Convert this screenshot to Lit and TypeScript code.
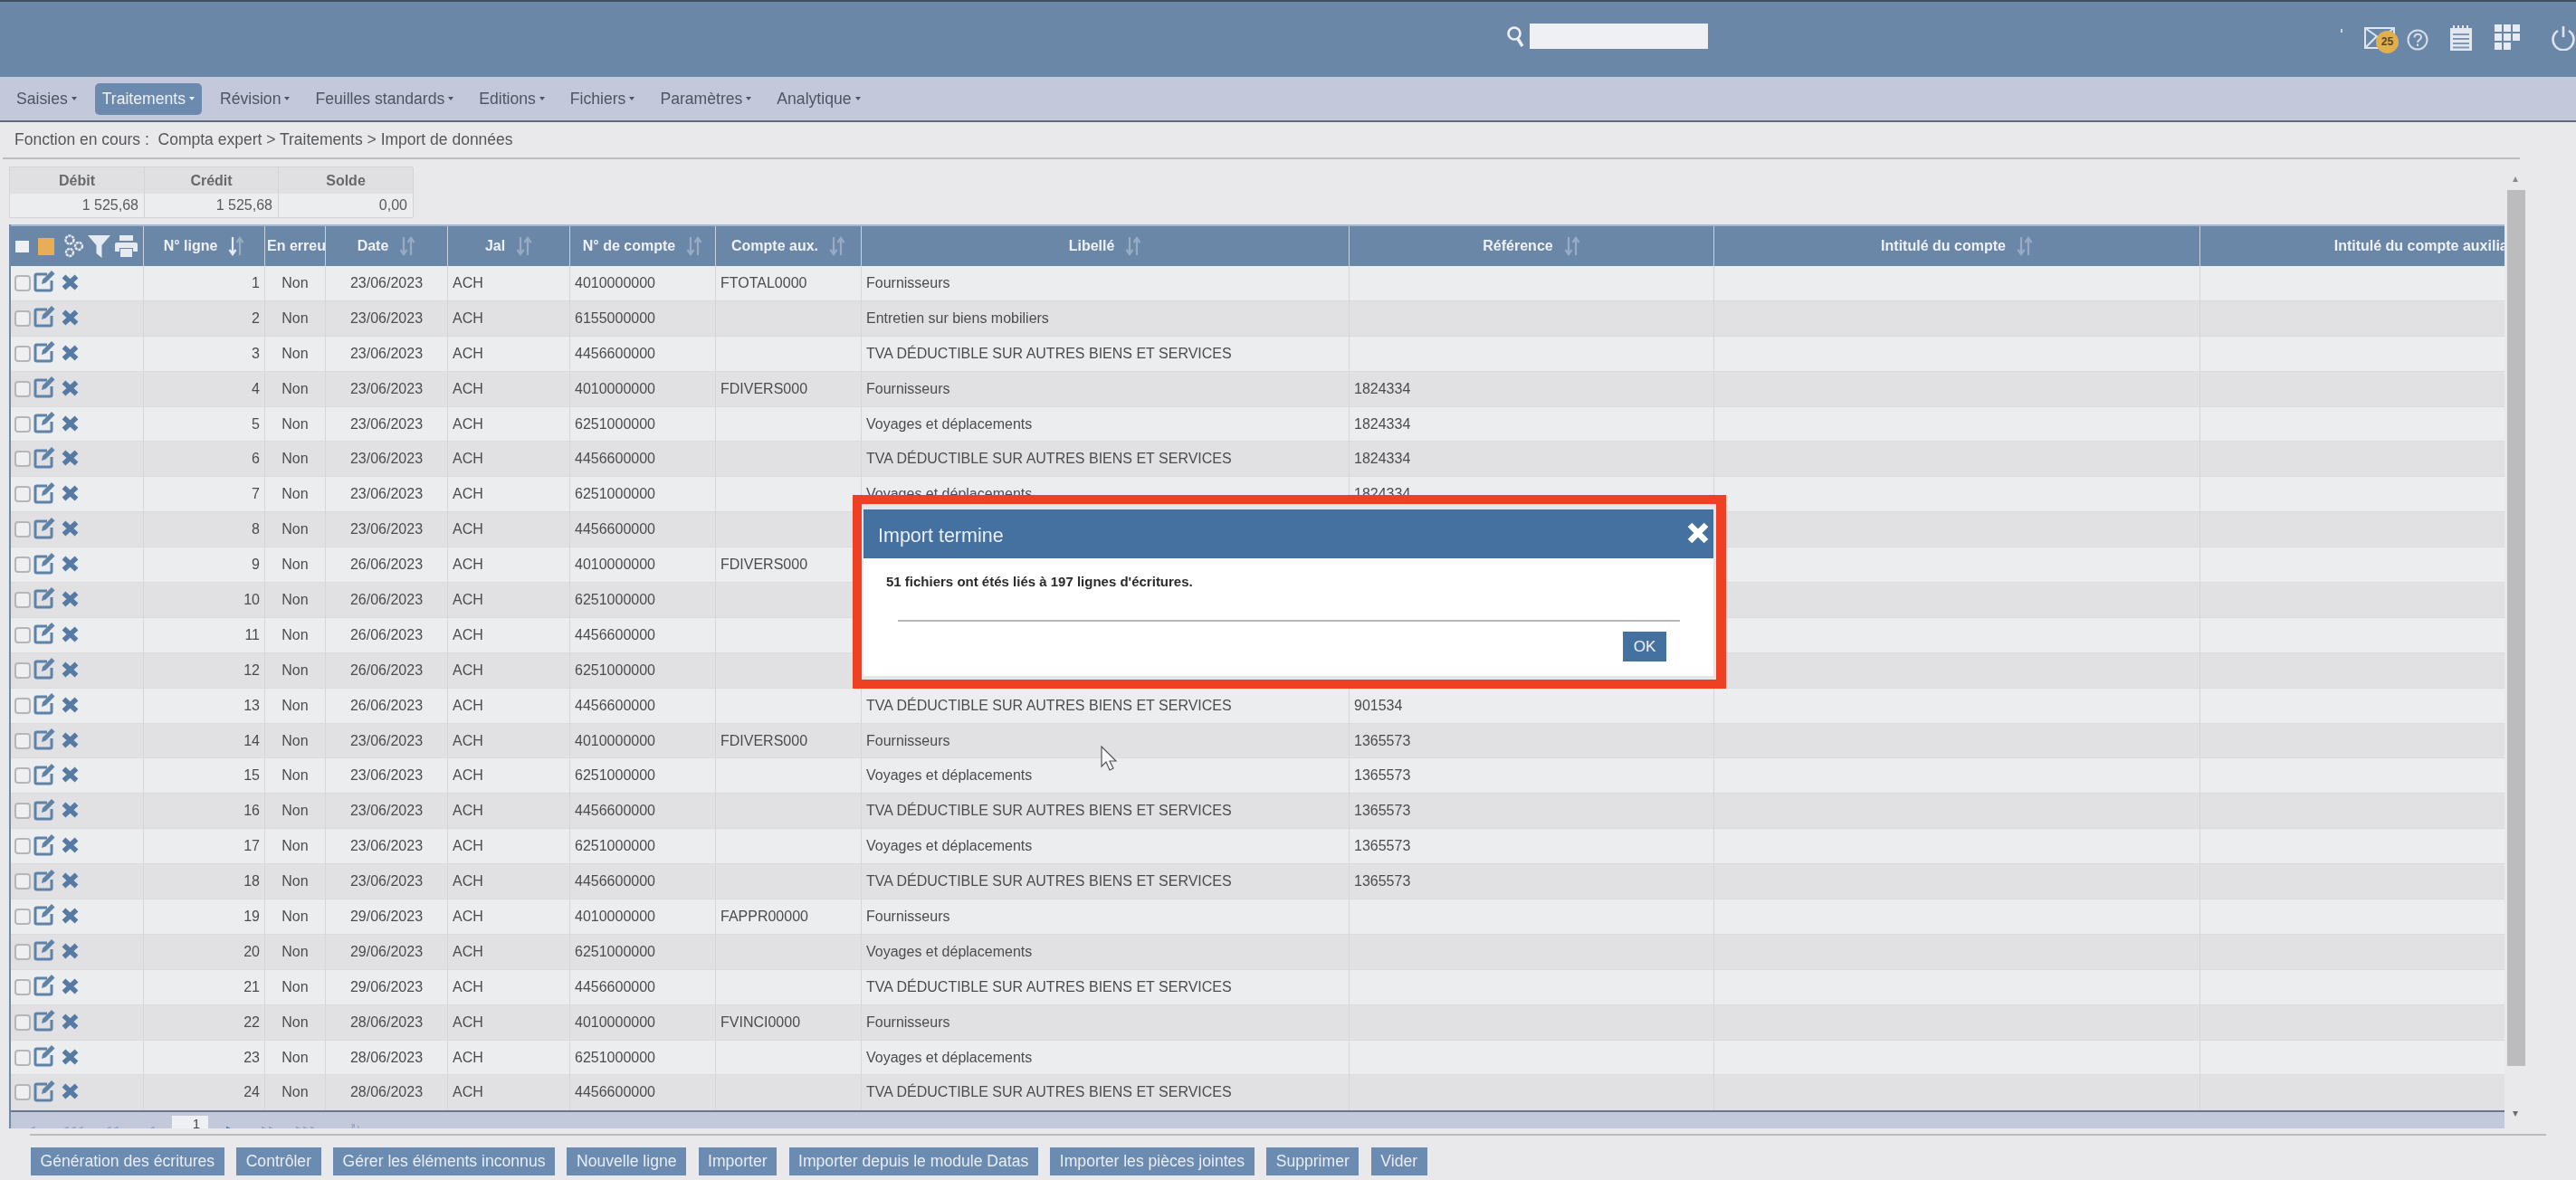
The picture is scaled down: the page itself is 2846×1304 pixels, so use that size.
import { LitElement, html, css, svg } from 'lit';
import { customElement } from 'lit/decorators.js';

const TVA = 'TVA DÉDUCTIBLE SUR AUTRES BIENS ET SERVICES';
const VOY = 'Voyages et déplacements';
const FOU = 'Fournisseurs';

// ligne, date, compte, aux, libelle, reference
const ROWS: [number, string, string, string, string, string][] = [
  [1, '23/06/2023', '4010000000', 'FTOTAL0000', FOU, ''],
  [2, '23/06/2023', '6155000000', '', 'Entretien sur biens mobiliers', ''],
  [3, '23/06/2023', '4456600000', '', TVA, ''],
  [4, '23/06/2023', '4010000000', 'FDIVERS000', FOU, '1824334'],
  [5, '23/06/2023', '6251000000', '', VOY, '1824334'],
  [6, '23/06/2023', '4456600000', '', TVA, '1824334'],
  [7, '23/06/2023', '6251000000', '', VOY, '1824334'],
  [8, '23/06/2023', '4456600000', '', TVA, '1824334'],
  [9, '26/06/2023', '4010000000', 'FDIVERS000', FOU, '901534'],
  [10, '26/06/2023', '6251000000', '', VOY, '901534'],
  [11, '26/06/2023', '4456600000', '', TVA, '901534'],
  [12, '26/06/2023', '6251000000', '', VOY, '901534'],
  [13, '26/06/2023', '4456600000', '', TVA, '901534'],
  [14, '23/06/2023', '4010000000', 'FDIVERS000', FOU, '1365573'],
  [15, '23/06/2023', '6251000000', '', VOY, '1365573'],
  [16, '23/06/2023', '4456600000', '', TVA, '1365573'],
  [17, '23/06/2023', '6251000000', '', VOY, '1365573'],
  [18, '23/06/2023', '4456600000', '', TVA, '1365573'],
  [19, '29/06/2023', '4010000000', 'FAPPR00000', FOU, ''],
  [20, '29/06/2023', '6251000000', '', VOY, ''],
  [21, '29/06/2023', '4456600000', '', TVA, ''],
  [22, '28/06/2023', '4010000000', 'FVINCI0000', FOU, ''],
  [23, '28/06/2023', '6251000000', '', VOY, ''],
  [24, '28/06/2023', '4456600000', '', TVA, ''],
];

const NAV = ['Saisies', 'Traitements', 'Révision', 'Feuilles standards', 'Editions', 'Fichiers', 'Paramètres', 'Analytique'];
const BUTTONS = ['Génération des écritures', 'Contrôler', 'Gérer les éléments inconnus', 'Nouvelle ligne', 'Importer', 'Importer depuis le module Datas', 'Importer les pièces jointes', 'Supprimer', 'Vider'];
const COLS = ['N° ligne', 'En erreur', 'Date', 'Jal', 'N° de compte', 'Compte aux.', 'Libellé', 'Référence', 'Intitulé du compte', 'Intitulé du compte auxiliaire'];

const sortIcon = (active = false) => html`<svg class="sort" viewBox="0 0 18 24" fill="none" stroke-width="2.200">
  <g stroke=${active ? '#e8edf3' : '#97abc4'}><path d="M5 2v19M1.500 16 5 21l3.500-5"/></g>
  <g stroke="#97abc4"><path d="M13 22V3M9.500 8 13 3l3.500 5"/></g>
</svg>`;

const editIcon = svg`<path d="M15 6H3.500A1.500 1.500 0 0 0 2 7.500V22.500A1.500 1.500 0 0 0 3.500 24H18.500A1.500 1.500 0 0 0 20 22.500V13" fill="none" stroke="#5f82a8" stroke-width="3"/><path d="M9 17l1-5L20 2l3.500 3.500-10 10z" fill="#5f82a8"/>`;

@customElement('app-root')
export class AppRoot extends LitElement {
  static styles = css`
:host {
  display: block;
  position: relative;
  width: 2846px;
  height: 1304px;
  overflow: hidden;
  background: #e9e9eb;
  font-family: "Liberation Sans", Arial, sans-serif;
  color: #4c4c4e;
}

.page {
  height: 1304px;
  display: flex;
  flex-direction: column;
  filter: blur(0.7px);
}

.top {
  height: 83px;
  flex: none;
  border-top: 2px solid #3f5063;
  background: #6b87a8;
  display: flex;
  align-items: flex-start;
  color: #e4e8ef;
}
.search { display: flex; align-items: center; margin: 23px 0 0 1664px; }
.search svg { width: 22px; height: 30px; margin-right: 4px; }
.search-box { width: 197px; height: 28px; background: #eef0f3; }
.tick { width: 2px; height: 4px; background: #c8d2e0; margin: 30px 0 0 699px; }
.tool { display: block; margin-top: 25px; flex: none; }
.mail { width: 46px; height: 38px; margin-left: 24px; position: relative; }
.mail svg { width: 34px; height: 24px; margin-top: 3px; display: block; }
.badge {
  position: absolute;
  left: 13px;
  top: 7px;
  width: 25px;
  height: 25px;
  border-radius: 50%;
  background: #e0b04f;
  color: #5a4a22;
  font-size: 12px;
  font-weight: bold;
  line-height: 25px;
  text-align: center;
}
.help { width: 24px; height: 24px; margin: 30px 0 0 1px; flex: none; }
.note { width: 26px; height: 29px; margin: 25px 0 0 23px; flex: none; }
.apps { width: 28px; height: 29px; margin: 25px 0 0 24px; flex: none; }
.power { width: 28px; height: 28px; margin: 26px 0 0 34px; flex: none; }

.nav {
  height: 48px;
  flex: none;
  border-bottom: 2px solid #5e6b7a;
  background: #c3c9da;
  box-sizing: content-box;
  display: flex;
  align-items: center;
  padding-left: 10px;
  gap: 12px;
  font-size: 17.600px;
  color: #4d5563;
}
.nav-item {
  height: 35px;
  padding: 0 8px;
  display: flex;
  align-items: center;
  border-radius: 5px;
}
.nav-item.active { background: #6b8aad; color: #eef1f6; }
.caret {
  width: 0;
  height: 0;
  margin-left: 4px;
  border-left: 3.500px solid transparent;
  border-right: 3.500px solid transparent;
  border-top: 4px solid currentColor;
}

.crumb {
  height: 39px;
  flex: none;
  padding-left: 16px;
  display: flex;
  align-items: center;
  font-size: 17.500px;
  white-space: pre;
  color: #55565a;
}
.rule { height: 2px; flex: none; background: #bcbcbe; margin: 0 62px 0 3px; }

.main { display: flex; flex: none; padding: 8px 0 0 10px; }
.sheet { width: 2757px; flex: none; }

.totals {
  display: grid;
  grid-template-columns: 149px 148px 149px;
  width: 446px;
  height: 57px;
  box-sizing: border-box;
  border: 1px solid #d4d4d7;
  margin-bottom: 7px;
  font-size: 16px;
}
.totals div { display: flex; align-items: center; border-right: 1px solid #d4d4d7; }
.totals .h { height: 29px; justify-content: center; background: #e0e0e2; font-weight: bold; color: #66686c; }
.totals .v { height: 26px; justify-content: flex-end; padding-right: 6px; background: #ecedef; color: #5a5b5e; }

.table {
  width: 2757px;
  overflow: hidden;
  box-sizing: border-box;
  border-left: 2px solid #6f89a8;
}
.row {
  display: grid;
  grid-template-columns: 147px 134px 67px 135px 135px 161px 161px 539px 403px 537px 538px;
  width: 2857px;
}
.head { height: 46px; background: #6b87a8; border-top: 2px solid #a3b7cf; box-sizing: border-box; color: #eef1f5; }
.head > div {
  display: flex;
  align-items: center;
  justify-content: center;
  min-width: 0;
  overflow: hidden;
  white-space: nowrap;
  border-right: 1px solid #c6d2e0;
  font-size: 16px;
  font-weight: bold;
}
.head .tools { justify-content: flex-start; padding-left: 5px; }
.head .tools svg, .head .tools span { flex: none; }
.white-box { width: 15px; height: 13px; background: #eef0f3; margin-right: 10px; }
.orange-box { width: 18px; height: 19px; background: #e7ae55; margin-right: 10px; }
.gears { width: 23px; height: 30px; margin-right: 4px; }
.filter { width: 25px; height: 26px; margin-right: 5px; }
.printer { width: 25px; height: 24px; }
.head .clip { justify-content: flex-start; padding-left: 2px; }
.sort { width: 18px; height: 24px; margin-left: 12px; flex: none; }

.body .row { height: 38.900px; background: #ecedef; font-size: 16px; }
.body .row:nth-child(even) { background: #e1e1e4; }
.body .cell {
  display: flex;
  align-items: center;
  padding: 0 5px;
  white-space: nowrap;
  border-right: 1px solid #d6d6d9;
  border-bottom: 1px solid #dbdbde;
  box-sizing: border-box;
}
.cell.right { justify-content: flex-end; }
.cell.center { justify-content: center; }
.cell.actions { padding: 0 0 0 4px; }
.check {
  width: 18px;
  height: 18px;
  box-sizing: border-box;
  border: 2px solid #b5b6ba;
  border-radius: 4px;
  background: #efeff1;
  margin-right: 3px;
}
.edit { width: 24px; height: 26px; margin: -5px 7px 0 0; }
.del { width: 19px; height: 18px; margin-top: -2px; }

.pager {
  height: 18px;
  overflow: hidden;
  background: #c3c9da;
  border-top: 2px solid #66788d;
  box-sizing: content-box;
  display: flex;
  align-items: flex-start;
  padding-left: 20px;
  color: #8ea3cb;
}
.pg { font-size: 13px; line-height: 13px; margin-top: 11px; letter-spacing: 1px; white-space: nowrap; }
.pg.b { margin-left: 29px; }
.pg.c { margin-left: 23px; }
.pg.d { margin-left: 32px; }
.pg.n { margin-left: 18px; width: 40px; height: 18px; margin-top: 4px; background: #eef0f3; box-sizing: border-box; text-align: right; padding-right: 8px; color: #44474c; line-height: 18px; font-size: 15px; }
.pg.next { margin-left: 20px; color: #5f7fc0; }
.pg.e { margin-left: 31px; }
.pg.f { margin-left: 22px; }
.pg.g { margin-left: 36px; }

.bar { width: 23px; flex: none; display: flex; flex-direction: column; align-items: center; }
.arrow { width: 0; height: 0; border-left: 3.500px solid transparent; border-right: 3.500px solid transparent; }
.arrow.up { border-bottom: 6px solid #8a8a8c; margin-top: 11px; }
.arrow.down { border-top: 6px solid #6d6d70; margin-top: 50px; }
.thumb { width: 20px; height: 968px; background: #bcbcbf; margin: 9px 0 0 3px; }

.rule2 { height: 2px; flex: none; background: #bcbcbe; margin: 6px 33px 0 33px; }

.actions-bar { display: flex; gap: 13.500px; padding: 13px 0 0 34px; flex: none; }
.btn {
  height: 31px;
  padding: 0 10.500px;
  display: flex;
  align-items: center;
  background: #6b8cb0;
  color: #e9edf3;
  font-size: 17.600px;
  white-space: nowrap;
}

.dialog {
  position: absolute;
  left: 942px;
  top: 547px;
  width: 965px;
  height: 214px;
  box-sizing: border-box;
  border: solid #ee4023;
  border-width: 10px 11px 10px 10px;
  padding: 6px 3px 4px 2px;
  background: #e4e6ec;
  display: flex;
  flex-direction: column;
}
.d-title {
  height: 54px;
  flex: none;
  background: #44719f;
  color: #e8eef5;
  display: flex;
  align-items: center;
  justify-content: space-between;
  padding: 5px 5px 0 16px;
  box-sizing: border-box;
  font-size: 21.500px;
  filter: blur(0.4px);
}
.d-title svg { width: 24px; height: 24px; margin-top: -8px; }
.d-body {
  flex: 1;
  background: #fff;
  padding: 17px 37px 0 25px;
  display: flex;
  flex-direction: column;
}
.d-msg { font-size: 15px; font-weight: bold; color: #2a2a2c; line-height: 18px; filter: blur(0.3px); }
.d-rule { height: 2px; background: #b9b9bb; margin: 33px 0 0 13px; }
.d-ok {
  align-self: flex-end;
  width: 48px;
  height: 33px;
  margin: 11px 15px 0 0;
  background: #44719f;
  color: #eef2f7;
  font-size: 17px;
  display: flex;
  align-items: center;
  justify-content: center;
}

.cursor { position: absolute; left: 1215px; top: 824px; width: 20px; height: 30px; filter: blur(0.5px); }
  `;

  renderHeader() {
    return html`<div class="top">
      <div class="search">
        <svg viewBox="0 0 22 30" fill="none" stroke="#eef1f5"><circle cx="9" cy="12" r="6.500" stroke-width="2.600"/><path d="M13 18l5 8" stroke-width="3.400"/></svg>
        <div class="search-box"></div>
      </div>
      <div class="tick"></div>
      <div class="tool mail">
        <svg viewBox="0 0 34 24" fill="none" stroke="#dfe5ee" stroke-width="2"><rect x="1" y="1" width="32" height="22"/><path d="M1 1l17 12L33 1M1 23l13-13"/></svg>
        <div class="badge">25</div>
      </div>
      <svg class="help" viewBox="0 0 24 24" fill="none" stroke="#d5dde8" stroke-width="2"><circle cx="12" cy="12" r="10.500"/><path d="M8.500 9.500c0-5 7.500-5 7.500-.5 0 3-4 3-4 6M12 16.500v2.500"/></svg>
      <svg class="note" viewBox="0 0 26 29"><rect x="1" y="4" width="24" height="25" fill="#e3e8ef"/><path d="M5 1v5M10 1v5M15 1v5M20 1v5" stroke="#e3e8ef" stroke-width="2"/><path d="M4 11h18M4 16h18M4 21h18M4 25.500h18" stroke="#7f98b5" stroke-width="1.800"/></svg>
      <svg class="apps" viewBox="0 0 28 29" fill="#e6ebf1">
        <rect x="0" y="0" width="8" height="8"/><rect x="10" y="0" width="8" height="8"/><rect x="20" y="0" width="8" height="8"/>
        <rect x="0" y="10" width="8" height="8"/><rect x="10" y="10" width="8" height="8"/><rect x="20" y="10" width="8" height="8"/>
        <rect x="0" y="20" width="8" height="8"/><rect x="10" y="20" width="8" height="8"/>
      </svg>
      <svg class="power" viewBox="0 0 28 28" fill="none" stroke="#dfe5ee" stroke-width="2.600"><path d="M8 6a11.500 11.500 0 1 0 12 0M14 1v12"/></svg>
    </div>`;
  }

  renderNav() {
    return html`<div class="nav">
      ${NAV.map((n) => html`<div class="nav-item ${n === 'Traitements' ? 'active' : ''}">${n}<span class="caret"></span></div>`)}
    </div>`;
  }

  renderHeadRow() {
    return html`<div class="row head">
      <div class="tools">
        <span class="white-box"></span>
        <span class="orange-box"></span>
        <svg class="gears" viewBox="0 0 23 30" fill="none" stroke="#e6ebf1" stroke-width="2.400"><circle cx="7" cy="8" r="4.500" stroke-dasharray="3 .8"/><circle cx="17" cy="15" r="4" stroke-dasharray="3 .8"/><circle cx="7" cy="22" r="4" stroke-dasharray="3 .8"/></svg>
        <svg class="filter" viewBox="0 0 25 26" fill="#e6ebf1"><path d="M0 1h25L15.500 12v14l-6-5V12z"/></svg>
        <svg class="printer" viewBox="0 0 25 24" fill="#e6ebf1"><path d="M5 0h15v6H5zM2 8h21a2 2 0 0 1 2 2v8h-5v-4H5v4H0v-8a2 2 0 0 1 2-2zM6 15h13v9H6z"/></svg>
      </div>
      ${COLS.map((c, i) => i === 1
        ? html`<div class="clip">${c}</div>`
        : html`<div>${c}${sortIcon(i === 0)}</div>`)}
    </div>`;
  }

  renderBodyRow(r: [number, string, string, string, string, string]) {
    return html`<div class="row">
      <div class="cell actions">
        <span class="check"></span>
        <svg class="edit" viewBox="0 0 24 26">${editIcon}</svg>
        <svg class="del" viewBox="0 0 19 18" stroke="#557aa3" stroke-width="5.500"><path d="M2.500 2.500l14 13M16.500 2.500l-14 13"/></svg>
      </div>
      <div class="cell right">${r[0]}</div>
      <div class="cell center">Non</div>
      <div class="cell center">${r[1]}</div>
      <div class="cell">ACH</div>
      <div class="cell">${r[2]}</div>
      <div class="cell">${r[3]}</div>
      <div class="cell">${r[4]}</div>
      <div class="cell">${r[5]}</div>
      <div class="cell"></div>
      <div class="cell"></div>
    </div>`;
  }

  render() {
    return html`<div class="page">
      ${this.renderHeader()}
      ${this.renderNav()}
      <div class="crumb">Fonction en cours :  Compta expert &gt; Traitements &gt; Import de données</div>
      <div class="rule"></div>
      <div class="main">
        <div class="sheet">
          <div class="totals">
            <div class="h">Débit</div><div class="h">Crédit</div><div class="h">Solde</div>
            <div class="v">1 525,68</div><div class="v">1 525,68</div><div class="v">0,00</div>
          </div>
          <div class="table">
            ${this.renderHeadRow()}
            <div class="body">${ROWS.map((r) => this.renderBodyRow(r))}</div>
            <div class="pager">
              <span class="pg a">◂</span><span class="pg b">◂◂◂</span><span class="pg c">◂◂</span><span class="pg d">◂</span>
              <span class="pg n">1</span>
              <span class="pg next">▸</span><span class="pg e">▸▸</span><span class="pg f">▸▸▸</span><span class="pg g">↻</span>
            </div>
          </div>
        </div>
        <div class="bar">
          <div class="arrow up"></div>
          <div class="thumb"></div>
          <div class="arrow down"></div>
        </div>
      </div>
      <div class="rule2"></div>
      <div class="actions-bar">${BUTTONS.map((b) => html`<div class="btn">${b}</div>`)}</div>
    </div>
    <div class="dialog">
      <div class="d-title">
        <span>Import termine</span>
        <svg viewBox="0 0 24 24" stroke="#fff" stroke-width="6.500"><path d="M3 3l18 18M21 3L3 21"/></svg>
      </div>
      <div class="d-body">
        <div class="d-msg">51 fichiers ont étés liés à 197 lignes d'écritures.</div>
        <div class="d-rule"></div>
        <div class="d-ok">OK</div>
      </div>
    </div>
    <svg class="cursor" viewBox="0 0 20 30"><path d="M2 1v22l5-5 4 9 4-2-4-8h7z" fill="#f7f7f8" stroke="#55565a" stroke-width="1.200"/></svg>`;
  }
}

declare global {
  interface HTMLElementTagNameMap {
    'app-root': AppRoot;
  }
}
